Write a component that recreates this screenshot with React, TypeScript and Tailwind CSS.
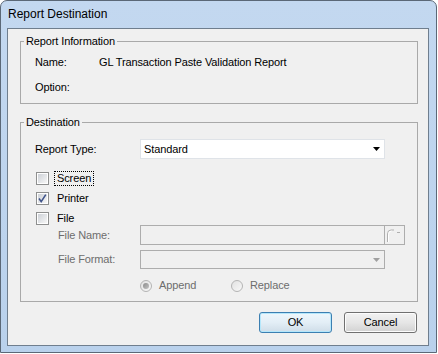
import React from "react";

const font = { fontFamily: '"Liberation Sans", Arial, sans-serif' };

function Group({ title, className, children }: { title: string; className: string; children: React.ReactNode }) {
  return (
    <fieldset className={`ml-[12px] w-[398px] border border-[#a9a9a9] ${className}`}>
      <legend className="ml-[3px] px-[2px] leading-[13px]">{title}</legend>
      {children}
    </fieldset>
  );
}

function CheckBox({ label, checked, focused }: { label: string; checked?: boolean; focused?: boolean }) {
  return (
    <div className="flex h-[13px] items-center">
      <span className="relative flex h-[13px] w-[13px] items-center justify-center border border-[#8e8f8f] bg-white">
        <span className="h-[9px] w-[9px] bg-gradient-to-br from-[#cdd1d7] to-[#f7f7f7]" />
        {checked && (
          <svg className="absolute left-0 top-0" width="11" height="11" viewBox="0 0 11 11">
            <path d="M2 5.5 L4.2 8.6 L8.8 1.6" fill="none" stroke="#40548a" strokeWidth="1.6" />
          </svg>
        )}
      </span>
      <span
        className={`ml-[6px] px-[2px] leading-[13px] ${focused ? "outline outline-1 outline-dotted outline-black" : ""}`}
      >
        {label}
      </span>
    </div>
  );
}

function Radio({ label, checked }: { label: string; checked?: boolean }) {
  return (
    <div className="flex h-[13px] items-center text-[#6d6d6d]">
      <span className="flex h-[12px] w-[12px] items-center justify-center rounded-full border border-[#b4b4b4] bg-gradient-to-br from-[#e2e2e2] to-[#f8f8f8]">
        {checked && <span className="h-[6px] w-[6px] rounded-full bg-gradient-to-br from-[#8c8c8c] to-[#c4c4c4]" />}
      </span>
      <span className="ml-[7px] leading-[13px]">{label}</span>
    </div>
  );
}

function Arrow({ color }: { color: string }) {
  return (
    <svg width="7" height="4" viewBox="0 0 7 4">
      <path d="M0 0 H7 L3.5 4 Z" fill={color} />
    </svg>
  );
}

export default function App() {
  return (
    <div className="h-[354px] w-[438px] bg-white text-[11px] text-black" style={font}>
      <div className="flex h-[353px] w-[437px] flex-col rounded-t-[7px] border border-[#5b6877] bg-gradient-to-b from-[#c3d8f0] to-[#b9d1ec] pb-[6px] pl-[6px] pr-[7px]">
        <div className="flex h-[27px] items-center pb-[1px] pl-[1px] text-[12px]">Report Destination</div>

        <div className="flex flex-1 flex-col border border-[#6f7e8e] bg-[#f0f0f0] tracking-[-0.12px]">
          <Group title="Report Information" className="mt-[6px] h-[69px]">
            <div className="flex flex-col pl-[14px] pt-[2px]">
              <div className="flex h-[25px] items-center">
                <span className="w-[64px]">Name:</span>
                <span>GL Transaction Paste Validation Report</span>
              </div>
              <div className="flex h-[25px] items-center">
                <span className="w-[64px]">Option:</span>
              </div>
            </div>
          </Group>

          <Group title="Destination" className="mt-[12px] h-[186px]">
            <div className="flex flex-col">
              <div className="mt-[10px] flex h-[20px] items-center">
                <span className="w-[119px] pl-[14px]">Report Type:</span>
                <div className="flex h-[20px] w-[245px] items-center justify-between border border-[#dfe3e8] bg-white pl-[3px] pr-[4px]">
                  <span>Standard</span>
                  <Arrow color="#000" />
                </div>
              </div>

              <div className="flex flex-col pl-[15px]">
                <div className="mt-[13px]">
                  <CheckBox label="Screen" focused />
                </div>
                <div className="mt-[7px]">
                  <CheckBox label="Printer" checked />
                </div>
                <div className="mt-[7px]">
                  <CheckBox label="File" />
                </div>
              </div>

              <div className="flex h-[20px] items-center text-[#6d6d6d]">
                <span className="w-[119px] pl-[37px]">File Name:</span>
                <div className="h-[20px] w-[245px] border border-[#adadad]" />
                <div className="flex h-[20px] w-[20px] items-start border border-l-0 border-[#adadad]">
                  <svg width="19" height="18" viewBox="0 0 19 18">
                    <path d="M2.5 16 V8 Q2.5 4 6 4 H9" fill="none" stroke="#b0b0b0" strokeWidth="1" />
                    <path d="M12 6.5 H15" fill="none" stroke="#b0b0b0" strokeWidth="1" />
                    <path d="M3.5 16 V8.5 Q3.5 5 6.5 5" fill="none" stroke="#ffffff" strokeWidth="1" />
                  </svg>
                </div>
              </div>

              <div className="mt-[5px] flex h-[19px] items-center text-[#6d6d6d]">
                <span className="w-[119px] pl-[37px]">File Format:</span>
                <div className="flex h-[19px] w-[245px] items-center justify-end border border-[#adadad] pr-[4px]">
                  <Arrow color="#a0a0a0" />
                </div>
              </div>

              <div className="mt-[10px] flex pl-[119px]">
                <div className="w-[91px]">
                  <Radio label="Append" checked />
                </div>
                <Radio label="Replace" />
              </div>
            </div>
          </Group>

          <div className="mt-[10px] flex justify-end gap-[12px] pr-[11px]">
            <button className="flex h-[21px] w-[73px] items-center justify-center rounded-[3px] border border-[#3c7fb1] bg-gradient-to-b from-[#eef7fc] via-[#e3eef6] to-[#cfdde8] shadow-[inset_0_0_0_1px_#b5e7fb]">
              OK
            </button>
            <button className="flex h-[21px] w-[73px] items-center justify-center rounded-[3px] border border-[#707070] bg-gradient-to-b from-[#f2f2f2] via-[#e6e6e6] to-[#d2d2d2] shadow-[inset_0_0_0_1px_#fcfcfc]">
              Cancel
            </button>
          </div>
        </div>
      </div>
    </div>
  );
}
